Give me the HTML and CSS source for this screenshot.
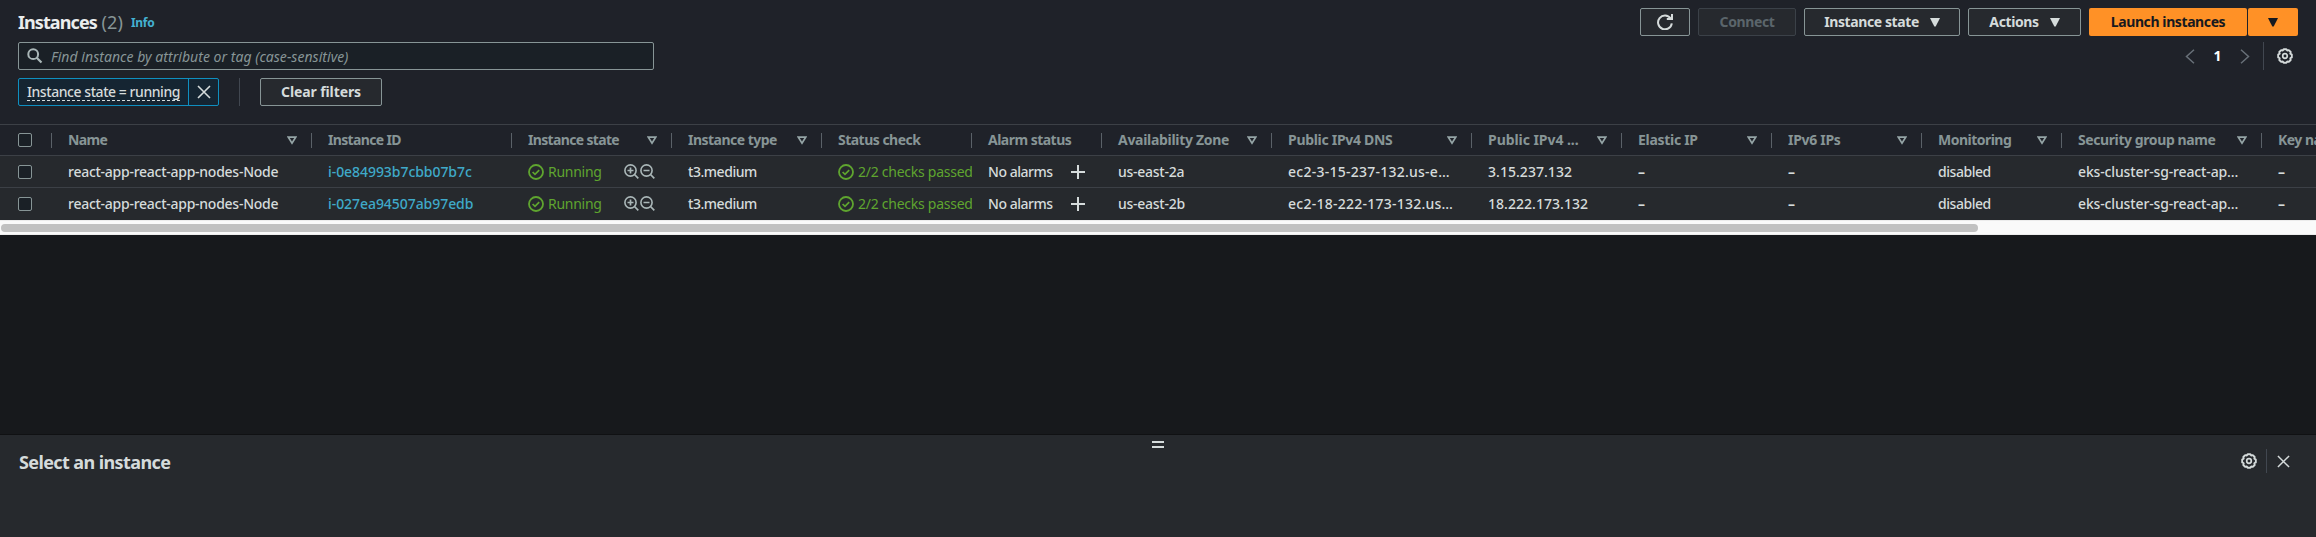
FILE: index.html
```html
<!DOCTYPE html>
<html lang="en">
<head>
<meta charset="utf-8">
<title>Instances | EC2</title>
<link rel="stylesheet" href="styles.css">
</head>
<body>
<svg class="defs" width="0" height="0" aria-hidden="true">
  <symbol id="gear" viewBox="0 0 16 16"><path d="M6.600 1.200h2.800l.8 1.300 1.600-.4 1.900 1.900-.4 1.600 1.500.9v2.900l-1.500.9.4 1.700-1.900 1.900-1.600-.4-.8 1.300H6.600l-.8-1.300-1.600.4-1.900-1.900.4-1.700-1.500-.9V6.500l1.500-.9-.4-1.600 1.900-1.900 1.600.4z" fill="none" stroke="currentColor" stroke-width="1.900" stroke-linejoin="round"/><circle cx="8" cy="8" r="2.300" fill="none" stroke="currentColor" stroke-width="1.700"/></symbol>
  <symbol id="close" viewBox="0 0 14 14"><path d="M1 1l12 12M13 1L1 13" fill="none" stroke="currentColor" stroke-width="1.600"/></symbol>
  <symbol id="sort" viewBox="0 0 10 9"><path d="M1.300 1.200h7.400L5 7.200z" fill="none" stroke="currentColor" stroke-width="1.700"/></symbol>
  <symbol id="caret" viewBox="0 0 10 9"><path d="M0 0h10L5.700 8.500H4.300z" fill="currentColor"/></symbol>
  <symbol id="ok" viewBox="0 0 16 16"><circle cx="8" cy="8" r="7" fill="none" stroke="currentColor" stroke-width="1.800"/><path d="M4.600 8l2.400 2.400 4.200-4.200" fill="none" stroke="currentColor" stroke-width="1.700"/></symbol>
  <symbol id="zoomin" viewBox="0 0 15 15"><circle cx="6.500" cy="6.500" r="5.600" fill="none" stroke="currentColor" stroke-width="1.600"/><path d="M10.500 10.500l3.800 3.800M3.500 6.500h6M6.500 3.500v6" fill="none" stroke="currentColor" stroke-width="1.700"/></symbol>
  <symbol id="zoomout" viewBox="0 0 15 15"><circle cx="6.500" cy="6.500" r="5.600" fill="none" stroke="currentColor" stroke-width="1.600"/><path d="M10.500 10.500l3.800 3.800M3.500 6.500h6" fill="none" stroke="currentColor" stroke-width="1.700"/></symbol>
  <symbol id="plus" viewBox="0 0 14 14"><path d="M7 0v14M0 7h14" fill="none" stroke="currentColor" stroke-width="2"/></symbol>
</svg>
<main class="page">
  <section class="toolbar">
    <div class="title-row">
      <h1 class="title">Instances <span class="count">(2)</span></h1>
      <a class="info">Info</a>
      <div class="actions">
        <button class="btn btn-icon"><svg width="16" height="16" viewBox="0 0 16 16"><path d="M14.800 9.300A6.900 6.900 0 1 1 13.600 4.400" fill="none" stroke="currentColor" stroke-width="2"/><path d="M15 0v5H9.800" fill="none" stroke="currentColor" stroke-width="2"/></svg></button>
        <button class="btn btn-connect" disabled>Connect</button>
        <button class="btn btn-state">Instance state<svg class="caret"><use href="#caret"/></svg></button>
        <button class="btn btn-actions">Actions<svg class="caret"><use href="#caret"/></svg></button>
        <div class="split"><button class="btn primary launch">Launch instances</button><button class="btn primary more"><svg class="caret"><use href="#caret"/></svg></button></div>
      </div>
    </div>
    <div class="search-row">
      <div class="search"><svg width="16" height="16" viewBox="0 0 16 16"><circle cx="6.200" cy="6.200" r="4.900" fill="none" stroke="currentColor" stroke-width="2"/><path d="M9.700 9.700l4.800 4.800" stroke="currentColor" stroke-width="2.200"/></svg><span class="placeholder">Find instance by attribute or tag (case-sensitive)</span></div>
      <div class="pager">
        <svg class="chev" viewBox="0 0 10 15"><path d="M9 .7L1.500 7.500 9 14.300"/></svg><span class="page-no">1</span><svg class="chev" viewBox="0 0 10 15"><path d="M1 .7l7.500 6.800L1 14.300"/></svg>
        <div class="prefs"><svg class="gear"><use href="#gear"/></svg></div>
      </div>
    </div>
    <div class="filter-row">
      <div class="token"><span class="token-label"><span class="token-text">Instance state = running</span></span><span class="token-x"><svg width="14" height="14"><use href="#close"/></svg></span></div>
      <span class="divider"></span>
      <button class="btn btn-clear">Clear filters</button>
    </div>
  </section>
  <section class="grid">
    <div class="row head">
      <div class="cell"><span class="check"></span></div>
      <div class="cell"><span class="tighter">Name</span><svg class="sort"><use href="#sort"/></svg></div>
      <div class="cell"><span class="tighter">Instance ID</span></div>
      <div class="cell"><span class="tighter">Instance state</span><svg class="sort"><use href="#sort"/></svg></div>
      <div class="cell"><span>Instance type</span><svg class="sort"><use href="#sort"/></svg></div>
      <div class="cell"><span>Status check</span></div>
      <div class="cell"><span>Alarm status</span></div>
      <div class="cell"><span class="loose">Availability Zone</span><svg class="sort"><use href="#sort"/></svg></div>
      <div class="cell"><span class="loose">Public IPv4 DNS</span><svg class="sort"><use href="#sort"/></svg></div>
      <div class="cell"><span class="looser">Public IPv4 ...</span><svg class="sort"><use href="#sort"/></svg></div>
      <div class="cell"><span class="loose">Elastic IP</span><svg class="sort"><use href="#sort"/></svg></div>
      <div class="cell"><span class="loose">IPv6 IPs</span><svg class="sort"><use href="#sort"/></svg></div>
      <div class="cell"><span>Monitoring</span><svg class="sort"><use href="#sort"/></svg></div>
      <div class="cell"><span class="mid">Security group name</span><svg class="sort"><use href="#sort"/></svg></div>
      <div class="cell"><span>Key name</span></div>
    </div>
    <div class="row">
      <div class="cell"><span class="check"></span></div>
      <div class="cell"><span>react-app-react-app-nodes-Node</span></div>
      <div class="cell"><a class="link">i-0e84993b7cbb07b7c</a></div>
      <div class="cell state"><svg class="ok"><use href="#ok"/></svg><span class="good">Running</span><span class="zooms"><svg><use href="#zoomin"/></svg><svg><use href="#zoomout"/></svg></span></div>
      <div class="cell"><span class="snug">t3.medium</span></div>
      <div class="cell status"><svg class="ok"><use href="#ok"/></svg><span class="good">2/2 checks passed</span></div>
      <div class="cell alarm"><span class="snug">No alarms</span><svg class="plus"><use href="#plus"/></svg></div>
      <div class="cell"><span>us-east-2a</span></div>
      <div class="cell"><span class="dns">ec2-3-15-237-132.us-e…</span></div>
      <div class="cell"><span class="ip">3.15.237.132</span></div>
      <div class="cell"><span class="none">–</span></div>
      <div class="cell"><span class="none">–</span></div>
      <div class="cell"><span class="snug">disabled</span></div>
      <div class="cell"><span class="sg">eks-cluster-sg-react-ap…</span></div>
      <div class="cell"><span class="none">–</span></div>
    </div>
    <div class="row">
      <div class="cell"><span class="check"></span></div>
      <div class="cell"><span>react-app-react-app-nodes-Node</span></div>
      <div class="cell"><a class="link">i-027ea94507ab97edb</a></div>
      <div class="cell state"><svg class="ok"><use href="#ok"/></svg><span class="good">Running</span><span class="zooms"><svg><use href="#zoomin"/></svg><svg><use href="#zoomout"/></svg></span></div>
      <div class="cell"><span class="snug">t3.medium</span></div>
      <div class="cell status"><svg class="ok"><use href="#ok"/></svg><span class="good">2/2 checks passed</span></div>
      <div class="cell alarm"><span class="snug">No alarms</span><svg class="plus"><use href="#plus"/></svg></div>
      <div class="cell"><span>us-east-2b</span></div>
      <div class="cell"><span class="dns">ec2-18-222-173-132.us…</span></div>
      <div class="cell"><span class="ip">18.222.173.132</span></div>
      <div class="cell"><span class="none">–</span></div>
      <div class="cell"><span class="none">–</span></div>
      <div class="cell"><span class="snug">disabled</span></div>
      <div class="cell"><span class="sg">eks-cluster-sg-react-ap…</span></div>
      <div class="cell"><span class="none">–</span></div>
    </div>
  </section>
  <div class="scrollbar"><div class="thumb"></div></div>
  <section class="panel">
    <div class="handle"></div>
    <div class="panel-row">
      <h2 class="panel-title">Select an instance</h2>
      <svg class="gear"><use href="#gear"/></svg><span class="panel-divider"></span><svg class="panel-x"><use href="#close"/></svg>
    </div>
  </section>
</main>
</body>
</html>
```
FILE: styles.css
```css
* { box-sizing: border-box; }
body { margin: 0; background: #17191c; color: #d5dbdb; font: 500 14px/22px "Noto Sans", "Open Sans", sans-serif; }
.defs { position: absolute; }
svg { flex: none; }
.page { width: 2316px; height: 537px; display: flex; flex-direction: column; overflow: hidden; }
.toolbar { height: 124px; padding: 8px 18px 0; background: #1f2229; flex: none; }
.title-row, .search-row, .filter-row { display: flex; align-items: center; height: 28px; }
.title { margin: 0; font-size: 18px; font-weight: 700; color: #eaeded; letter-spacing: -.92px; white-space: nowrap; }
.count { color: #879596; font-weight: 400; letter-spacing: .1px; margin-left: 1px; }
.info { margin: 2px 0 0 8px; font-size: 12px; font-weight: 700; color: #44b1d1; letter-spacing: -.3px; }
.actions { display: flex; gap: 8px; margin-left: auto; }
.btn { height: 28px; padding: 0; border: 1px solid #879596; border-radius: 2px; background: #26292e; color: #d5dbdb; font: 700 14px/20px "Noto Sans", "Open Sans", sans-serif; letter-spacing: -.4px; display: flex; align-items: center; justify-content: center; white-space: nowrap; }
.btn-icon { width: 50px; }
.btn-connect { width: 98px; border-color: #3b4148; color: #5b656b; }
.btn-state { width: 156px; }
.btn-actions { width: 113px; }
.btn-clear { width: 122px; letter-spacing: -.1px; }
.caret { width: 10px; height: 9px; margin-left: 11px; }
.split { display: flex; gap: 1px; }
.primary { border: 0; background: #ff9126; color: #16191f; }
.launch { width: 158px; }
.more { width: 50px; }
.more .caret { margin: 0; }
.search-row { margin-top: 6px; }
.search { width: 636px; height: 28px; border: 1px solid #879596; border-radius: 2px; background: #1a2026; display: flex; align-items: center; padding-left: 8px; gap: 8px; color: #aab7b8; }
.placeholder { font-style: italic; font-weight: 400; color: #879596; letter-spacing: .04px; margin-top: 1px; }
.pager { display: flex; align-items: center; margin-left: auto; height: 28px; }
.chev { width: 10px; height: 15px; fill: none; stroke: #687078; stroke-width: 1.5; }
.page-no { width: 45px; text-align: center; color: #fff; font-weight: 700; }
.gear { width: 16px; height: 16px; }
.prefs { height: 28px; width: 35px; margin-left: 13px; border-left: 1px solid #414750; padding: 6px 5px 6px 13px; display: flex; }
.filter-row { margin-top: 8px; }
.token { display: flex; width: 201px; height: 28px; border: 1px solid #0f8fc0; border-radius: 2px; background: #152532; }
.token-label { display: flex; align-items: flex-start; width: 170px; padding: 3px 0 0 8px; border-right: 1px solid #0f8fc0; }
.token-text { line-height: 19px; height: 19px; border-bottom: 1px dashed #d5dbdb; white-space: nowrap; letter-spacing: -.44px; }
.token-x { flex: 1; display: flex; align-items: center; justify-content: center; }
.divider { width: 1px; height: 28px; background: #414750; margin: 0 20px; }
.grid { width: 2316px; overflow: hidden; flex: none; background: #26292d; padding-bottom: 1px; }
.row { display: grid; grid-template-columns: 52px 260px 200px 160px 150px 150px 130px 170px 200px 150px 150px 150px 140px 200px 160px; height: 32px; border-top: 1px solid #3c4046; background: #26292d; width: 2422px; letter-spacing: -.26px; }
.head { height: 31px; background: #1f2229; color: #879596; font-weight: 700; letter-spacing: -.52px; }
.tighter { letter-spacing: -.66px; }
.mid { letter-spacing: -.41px; }
.loose { letter-spacing: -.3px; }
.looser { letter-spacing: -.06px; }
.snug { letter-spacing: -.46px; }
.dns { letter-spacing: .25px; }
.ip { letter-spacing: .04px; }
.sg { letter-spacing: -.14px; }
.none { font-weight: 700; }
.cell { display: flex; align-items: center; justify-content: space-between; padding: 0 15px 0 16px; white-space: nowrap; overflow: hidden; }
.cell:first-child { padding-left: 18px; }
.head .cell { background: linear-gradient(#5a6168, #5a6168) right 8px / 1px 15px no-repeat; }
.check { width: 14px; height: 14px; border: 1px solid #879596; border-radius: 2px; background: #1a2026; }
.sort { width: 10px; height: 9px; color: #95a5a6; }
.link { color: #3fa9c9; letter-spacing: -.06px; }
.good { color: #5fa52f; margin-left: 4px; font-weight: 400; letter-spacing: -.26px; }
.ok { width: 16px; height: 16px; color: #5fa52f; }
.state, .status { justify-content: flex-start; padding-right: 0; }
.alarm { padding-right: 17px; }
.zooms { display: flex; gap: 1px; margin-left: auto; padding-right: 17px; }
.zooms svg { width: 15px; height: 15px; color: #aab7b8; }
.plus { width: 14px; height: 14px; }
.scrollbar { height: 15px; background: #fafafa; border: solid #ececec; border-width: 1px 0; padding: 3px 1px; flex: none; }
.thumb { width: 1977px; height: 8px; border-radius: 4px; background: #c1c1c1; }
.panel { height: 103px; flex: none; margin-top: auto; border-top: 1px solid #101113; background: #26292d; }
.handle { width: 12px; height: 7px; margin: 6px auto 0; border: solid #d5dbdb; border-width: 2px 0; }
.panel-row { display: flex; align-items: center; padding: 0 26px 0 19px; height: 24px; margin-top: 1px; }
.panel-title { margin: 1px auto 0 0; font-size: 18px; line-height: 24px; font-weight: 700; letter-spacing: -.6px; }
.panel-divider { width: 1px; height: 24px; background: #414750; margin: 0 10px 0 9px; }
.panel-x { width: 13px; height: 13px; }
```
